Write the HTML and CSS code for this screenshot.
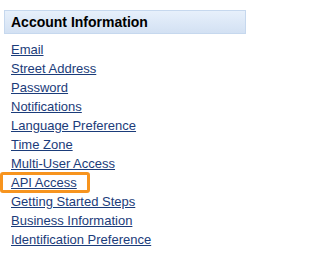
FILE: index.html
```html
<!DOCTYPE html>
<html>
<head>
<meta charset="utf-8">
<link rel="stylesheet" href="styles.css">
</head>
<body>
<div class="panel">
  <h2 class="panel-title">Account Information</h2>
  <ul class="links">
    <li><a href="#">Email</a></li>
    <li><a href="#">Street Address</a></li>
    <li><a href="#">Password</a></li>
    <li><a href="#">Notifications</a></li>
    <li><a href="#">Language Preference</a></li>
    <li><a href="#">Time Zone</a></li>
    <li><a href="#">Multi-User Access</a></li>
    <li class="highlight"><a href="#">API Access</a></li>
    <li><a href="#">Getting Started Steps</a></li>
    <li><a href="#">Business Information</a></li>
    <li><a href="#">Identification Preference</a></li>
  </ul>
</div>
</body>
</html>
```
FILE: styles.css
```css
html, body {
  margin: 0;
  padding: 0;
  background: #ffffff;
}
body {
  font-family: "Liberation Sans", Arial, sans-serif;
}
.panel {
  width: 242px;
  padding: 10px 0 0 4px;
}
.panel-title {
  margin: 0;
  height: 22px;
  line-height: 22px;
  padding-left: 6px;
  border: 1px solid #c6d8ee;
  background: linear-gradient(#e7f0fb, #d3e1f3);
  font-size: 14px;
  font-weight: bold;
  color: #000000;
}
.links {
  list-style: none;
  margin: 0;
  padding: 6px 0 0 7px;
}
.links li {
  font-size: 13px;
  line-height: 19px;
}
.links a {
  color: #1b3c7a;
  text-decoration: underline;
}
.highlight {
  position: relative;
}
.highlight::after {
  content: "";
  position: absolute;
  left: -11px;
  top: -1px;
  width: 84px;
  height: 15px;
  border: 3px solid #f7941e;
  border-radius: 3px;
  pointer-events: none;
}
```
